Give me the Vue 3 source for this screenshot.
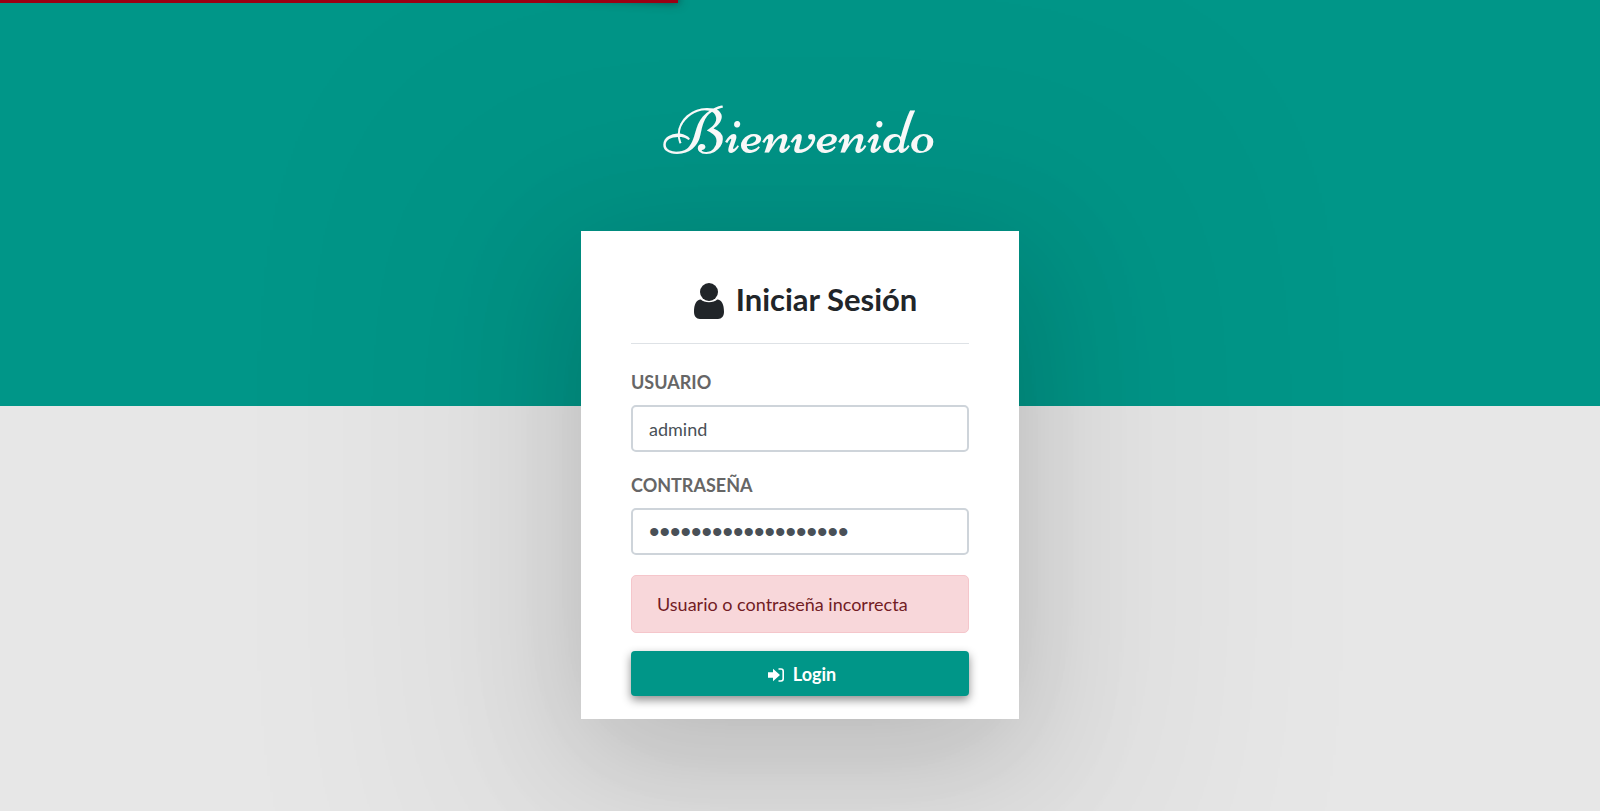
<script setup>
import { ref } from 'vue'

const usuario = ref('admind')
const contrasena = ref('contrasena-admind-1')
const error = ref('Usuario o contraseña incorrecta')
const progress = ref(42.4)
</script>

<template>
  <div class="page">
    <div class="progress" :style="{ width: progress + '%' }">
      <div class="peg"></div>
      <div class="bar"></div>
    </div>
    <main class="content">
      <h1 class="logo">Bienvenido</h1>
      <form class="card" @submit.prevent>
        <h2 class="title">
          <svg class="user-icon" viewBox="0 0 30 36" aria-hidden="true">
            <circle cx="15" cy="9" r="9" />
            <path d="M6.800 16.500C2.300 16.500 0 21.500 0 28.800C0 33 2.300 36 6 36H24C27.700 36 30 33 30 28.800C30 21.500 27.700 16.500 23.200 16.500C21.200 18.300 18.500 19.300 15 19.300S8.800 18.300 6.800 16.500Z" />
          </svg>
          <span>Iniciar Sesión</span>
        </h2>
        <div class="field">
          <label for="usuario">USUARIO</label>
          <input id="usuario" v-model="usuario" type="text" />
        </div>
        <div class="field">
          <label for="contrasena">CONTRASEÑA</label>
          <input id="contrasena" v-model="contrasena" class="password" type="password" />
        </div>
        <div class="alert" role="alert">{{ error }}</div>
        <button class="login" type="submit">
          <svg class="login-icon" viewBox="0 0 16 14" aria-hidden="true">
            <path d="M0 4.200H5V.700L12 7L5 13.300V9.800H0Z" fill="currentColor" />
            <path d="M10.500 1H13Q15.200 1 15.200 3.200V10.800Q15.200 13 13 13H10.500" fill="none" stroke="currentColor" stroke-width="1.600" />
          </svg>
          <span>Login</span>
        </button>
      </form>
    </main>
  </div>
</template>

<style>
body {
  margin: 0;
}
</style>

<style scoped>
.page {
  position: relative;
  min-height: 100vh;
  overflow: hidden;
  box-sizing: border-box;
  background: linear-gradient(#009688 calc(50vh + 1px), #e7e7e7 calc(50vh + 1px));
  font-family: Lato, "Liberation Sans", sans-serif;
  font-size: 18px;
  line-height: 26px;
  color: #212529;
}
.progress {
  position: absolute;
  top: 0;
  left: 0;
  z-index: 1;
  height: 3px;
}
.peg {
  position: absolute;
  top: 0;
  right: 0;
  width: 125px;
  height: 100%;
  transform: rotate(3deg) translate(0, -5px);
  box-shadow: 0 0 12px #212529, 0 0 6px #212529;
}
.bar {
  position: relative;
  height: 100%;
  background: #9b0014;
}
.content {
  display: flex;
  flex-direction: column;
  align-items: center;
  justify-content: center;
  gap: 58px;
  min-height: 100vh;
  box-sizing: border-box;
  padding: 40px 20px;
}
.logo {
  margin: 0;
  font-family: Niconne, cursive;
  font-size: 65px;
  font-weight: 400;
  line-height: 81px;
  color: #fff;
}
.card {
  display: flex;
  flex-direction: column;
  width: 100%;
  max-width: 438px;
  box-sizing: border-box;
  padding: 44px 50px 23px;
  background: #fff;
  box-shadow: 0 36px 240px 144px rgba(0, 0, 0, 0.05), 0 36px 119px rgba(0, 0, 0, 0.16);
}
.title {
  display: flex;
  align-items: center;
  justify-content: center;
  gap: 12px;
  margin: 0 0 25px;
  padding: 0 0 20px 11px;
  border-bottom: 1px solid #dee2e6;
  font-size: 31px;
  font-weight: 700;
  line-height: 48px;
}
.user-icon {
  width: 30px;
  height: 36px;
  margin-top: 4px;
  fill: currentColor;
}
.field {
  display: flex;
  flex-direction: column;
  gap: 10px;
  margin-bottom: 20px;
}
label {
  font-weight: 700;
  color: #666;
}
input {
  width: 100%;
  height: 47px;
  box-sizing: border-box;
  padding: 0 16px;
  border: 2px solid #ced4da;
  border-radius: 5px;
  background: #fff;
  font: inherit;
  color: #495057;
}
.password {
  font-family: "Liberation Sans", sans-serif;
  font-size: 30px;
}
.alert {
  margin-bottom: 18px;
  padding: 15px 25px;
  border: 1px solid #f5c6cb;
  border-radius: 5px;
  background: #f8d7da;
  color: #721c24;
}
.login {
  display: flex;
  align-items: center;
  justify-content: center;
  gap: 9px;
  height: 45px;
  padding: 0 6px 0 10px;
  border: 0;
  border-radius: 4px;
  background: #009688;
  box-shadow: 0 4px 10px rgba(0, 0, 0, 0.45);
  font: inherit;
  font-weight: 700;
  color: #fff;
}
.login-icon {
  width: 16px;
  height: 14px;
  margin-top: 2px;
}
</style>
